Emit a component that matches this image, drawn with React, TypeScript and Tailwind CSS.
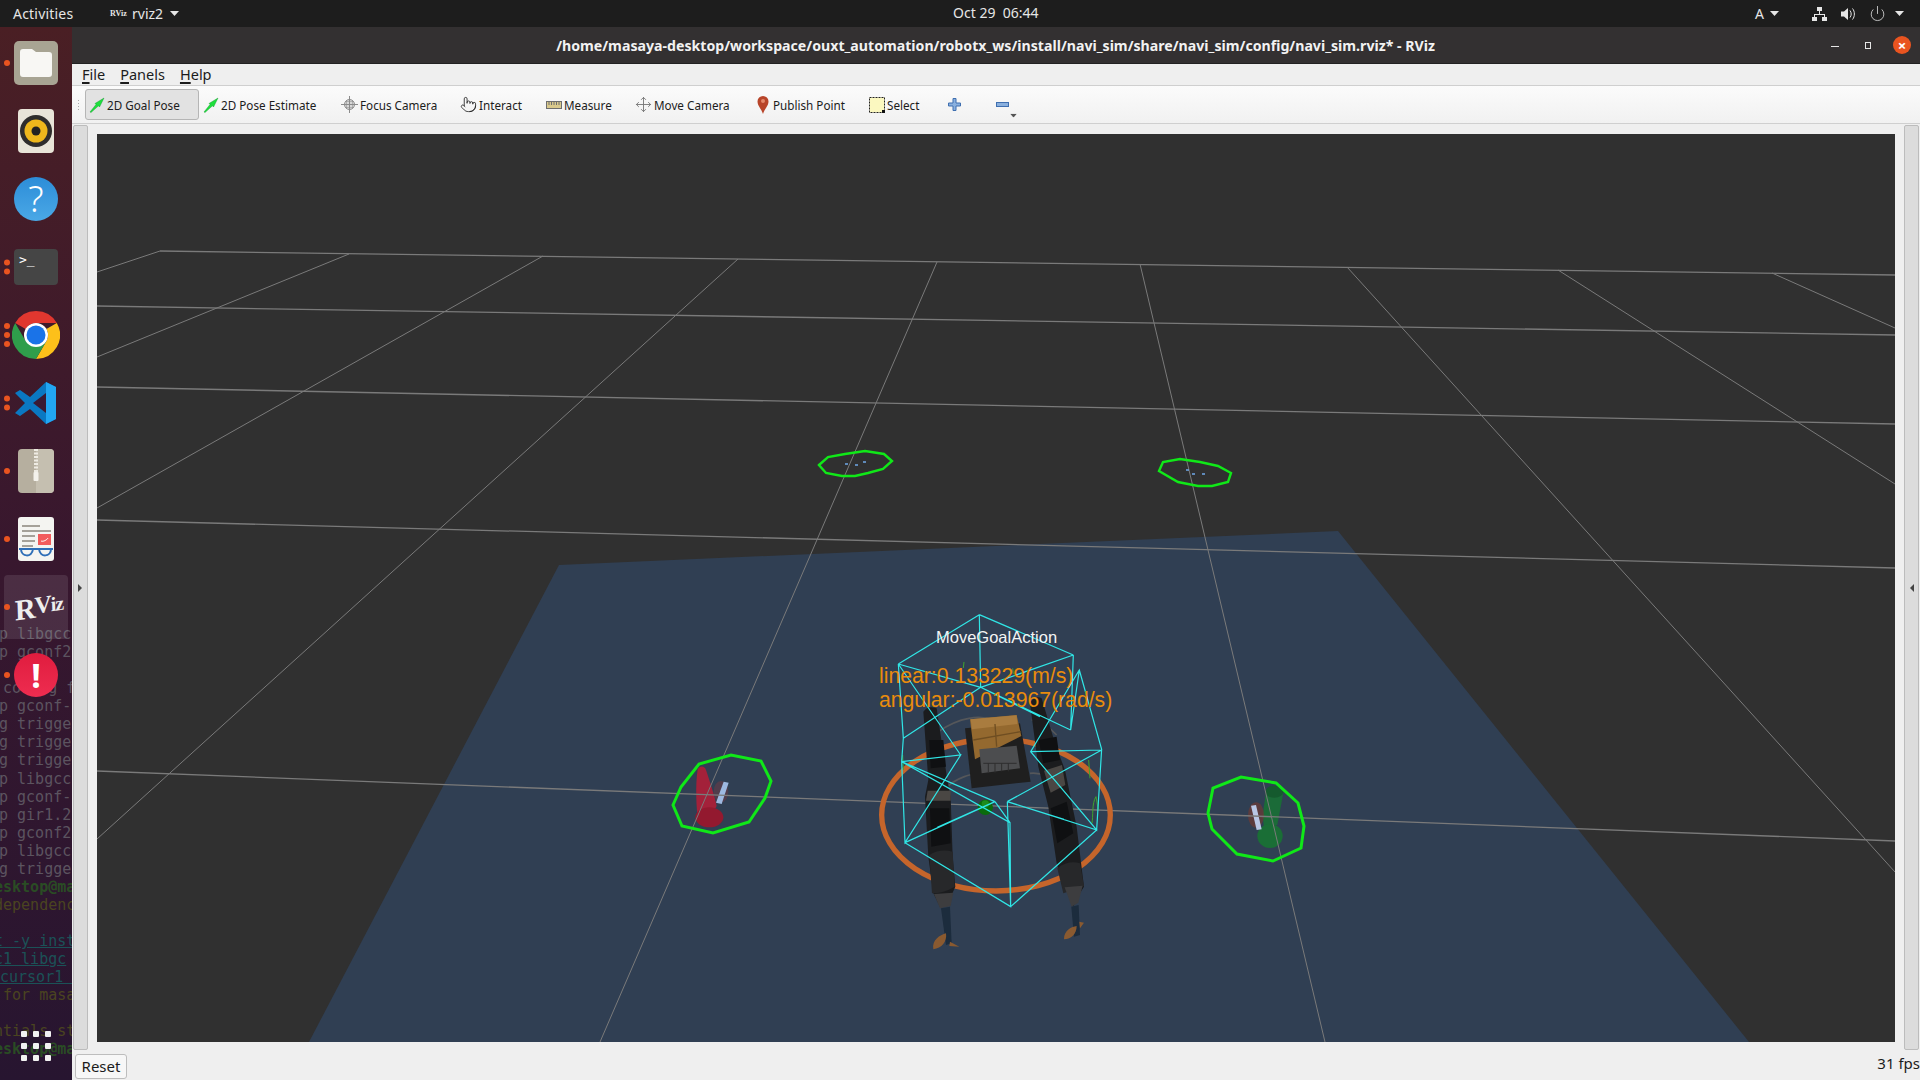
import { Move, Pointer, Power } from "lucide-react";
import React from "react";

const uiFont = "font-['Noto_Sans',sans-serif]";

const Caret = ({ className = "" }: { className?: string }) => (
  <svg width="9" height="5" viewBox="0 0 9 5" className={className}>
    <path d="M0 0H9L4.5 5Z" fill="currentColor" />
  </svg>
);

const TopBar = () => (
  <div className={`flex h-[27px] shrink-0 items-center bg-[#1d1d1d] text-[14px] text-[#e6e6e6] ${uiFont}`}>
    <span className="ml-[13px] w-[97px] tracking-[0.2px]">Activities</span>
    <span className="w-[22px] font-['Liberation_Serif',serif] text-[8px] font-bold">RViz</span>
    <span>rviz2</span>
    <Caret className="ml-[7px]" />
    <span className="mb-[2px] ml-[774px] w-[802px] whitespace-pre">Oct 29  06:44</span>
    <span>A</span>
    <Caret className="ml-[6px]" />
    <svg width="15" height="14" viewBox="0 0 15 14" className="ml-[33px]" fill="#e6e6e6">
      <rect x="5" y="0" width="5" height="4" />
      <rect x="0" y="10" width="5" height="4" />
      <rect x="10" y="10" width="5" height="4" />
      <path d="M7 4h1v3h5v3h-1V8H3v2H2V7h5Z" />
    </svg>
    <svg width="15" height="14" viewBox="0 0 15 14" className="ml-[14px]" fill="#e6e6e6">
      <path d="M0 4.500h3L7 1v12L3 9.500H0Z" />
      <path d="M9 3.500c1.600 2 1.600 5 0 7M11.500 1.500c2.500 3 2.500 8 0 11" fill="none" stroke="#e6e6e6" />
    </svg>
    <Power className="ml-[13px]" size={17} strokeWidth={1.1} />
    <Caret className="ml-[9px]" />
  </div>
);

const grey = "text-[#5c5460]";
const olive = "ml-[-5px] text-[#4a4420]";
const teal = "ml-[-5px] text-[#1b5257] underline";
const green = "ml-[-5px] font-bold text-[#2a4c24]";

const dockRows: { text: string; tone: string }[] = [
  { text: "p libgcc", tone: grey },
  { text: "p gconf2", tone: grey },
  { text: "", tone: "" },
  { text: "coding f", tone: `ml-[4px] ${grey}` },
  { text: "p gconf-", tone: grey },
  { text: "g trigge", tone: grey },
  { text: "g trigge", tone: grey },
  { text: "g trigge", tone: grey },
  { text: "p libgcc", tone: grey },
  { text: "p gconf-", tone: grey },
  { text: "p gir1.2", tone: grey },
  { text: "p gconf2", tone: grey },
  { text: "p libgcc", tone: grey },
  { text: "g trigge", tone: grey },
  { text: "esktop@ma", tone: green },
  { text: "dependenc", tone: olive },
  { text: "", tone: "" },
  { text: "t -y inst", tone: teal },
  { text: "c1 libgc", tone: teal },
  { text: "cursor1 l", tone: `ml-[1px] ${teal}` },
  { text: " for masa", tone: olive },
  { text: "", tone: "" },
  { text: "ntials st", tone: olive },
  { text: "esktop@ma", tone: green },
];

const Chrome = () => (
  <svg width="48" height="48" viewBox="0 0 48 48">
    <path d="M24 0A24 24 0 0 1 44.800 12H24A12 12 0 0 0 13.600 18L3.200 12A24 24 0 0 1 24 0Z" fill="#e0372f" />
    <path d="M44.800 12A24 24 0 0 1 24 48L34.400 30A12 12 0 0 0 34.400 18Z" fill="#fdc01a" />
    <path d="M3.200 12L13.600 30L24 36L34.400 30L24 48A24 24 0 0 1 3.200 12Z" fill="#2f9e4b" />
    <circle cx="24" cy="24" r="12" fill="#fff" />
    <circle cx="24" cy="24" r="9.500" fill="#1a73e8" />
  </svg>
);

const VsCode = () => (
  <svg width="44" height="44" viewBox="0 0 44 44">
    <path d="M32 1L42 6V38L32 43L16 28L6 35L1 32L11 22L1 12L6 9L16 16Z" fill="#0a78c2" />
    <path d="M32 1L42 6V38L32 43Z" fill="#22a6f2" />
    <path d="M32 12L19 22L32 32Z" fill="#3a1a33" />
  </svg>
);

const DocGlasses = () => (
  <svg width="36" height="44" viewBox="0 0 36 44">
    <rect width="36" height="44" rx="3" fill="#f4f4f1" />
    <path d="M4 8h18v2H4ZM4 13h29v2H4ZM4 18h13v2H4ZM4 23h13v2H4ZM4 28h11v2H4Z" fill="#a5a199" />
    <rect x="20" y="17" width="13" height="11" fill="#f25c5c" />
    <path d="M23 24c2 1 6-1 7-3" stroke="#fff" fill="none" />
    <path d="M1 32h34M3 32c0 8 11 9 12 0M21 32c1 9 12 8 12 0" stroke="#2f6fb8" strokeWidth="2" fill="none" />
  </svg>
);

const dockApps: { id: string; dots: number; icon: React.ReactNode }[] = [
  {
    id: "files",
    dots: 1,
    icon: (
      <div className="flex h-[44px] w-[44px] items-center justify-center rounded-[5px] bg-[#a8a493]">
        <svg width="32" height="28" viewBox="0 0 32 28">
          <path d="M0 3a3 3 0 0 1 3-3h9l4 3h13a3 3 0 0 1 3 3v19a3 3 0 0 1-3 3H3a3 3 0 0 1-3-3Z" fill="#f8f7f4" />
        </svg>
      </div>
    ),
  },
  {
    id: "rhythmbox",
    dots: 0,
    icon: (
      <svg width="36" height="44" viewBox="0 0 36 44">
        <rect width="36" height="44" rx="4" fill="#e8e4d8" />
        <circle cx="18" cy="22" r="16" fill="#2f2d2c" />
        <circle cx="18" cy="22" r="11.500" fill="#eeb71c" />
        <circle cx="18" cy="22" r="4.500" fill="#222" />
      </svg>
    ),
  },
  {
    id: "help",
    dots: 0,
    icon: (
      <div className="flex h-[44px] w-[44px] items-center justify-center rounded-full bg-linear-to-b from-[#2c8dd8] to-[#4aa8e6] font-['Noto_Sans',sans-serif] text-[36px] font-light leading-none text-white">
        ?
      </div>
    ),
  },
  {
    id: "terminal",
    dots: 2,
    icon: (
      <div className="h-[36px] w-[44px] rounded-[4px] bg-[#454545] pl-[5px] font-['DejaVu_Sans_Mono',monospace] text-[13px] leading-[22px] text-white">
        &gt;_
      </div>
    ),
  },
  { id: "chrome", dots: 3, icon: <Chrome /> },
  { id: "vscode", dots: 2, icon: <VsCode /> },
  {
    id: "archive",
    dots: 1,
    icon: (
      <svg width="36" height="44" viewBox="0 0 36 44">
        <rect width="36" height="44" rx="4" fill="#b6af9f" />
        <path d="M18 0h14a4 4 0 0 1 4 4v36a4 4 0 0 1-4 4H18Z" fill="#c5bfb0" />
        <path d="M18 0v24" stroke="#efece4" strokeWidth="4" strokeDasharray="2 1.500" />
        <rect x="15.500" y="23" width="5" height="9" rx="1" fill="#f4f2ec" />
      </svg>
    ),
  },
  { id: "doc", dots: 1, icon: <DocGlasses /> },
  {
    id: "rviz",
    dots: 1,
    icon: (
      <div className="ml-[6px] flex h-[36px] w-[44px] rotate-[-8deg] -skew-x-6 items-center justify-center font-['Liberation_Serif',serif] font-bold leading-none tracking-[-1px] text-[#eeeeee]">
        <span className="text-[29px]">R</span>
        <span className="-mt-[4px] text-[24px]">V</span>
        <span className="-mt-[2px] text-[20px]">iz</span>
      </div>
    ),
  },
  {
    id: "error",
    dots: 1,
    icon: (
      <div className="flex h-[44px] w-[44px] items-center justify-center rounded-full bg-linear-to-b from-[#e01c3e] to-[#ee2c50] font-['Noto_Sans',sans-serif] text-[34px] font-bold leading-none text-white">
        !
      </div>
    ),
  },
];

const Dock = () => (
  <div className="relative flex w-[72px] shrink-0 flex-col overflow-hidden bg-linear-to-b from-[#4a1f24] via-[#38172e] to-[#271530] pt-[2px]">
    <div className="absolute left-[-1px] top-[598px] font-['DejaVu_Sans_Mono',monospace] text-[15px] leading-[18.07px] whitespace-pre">
      {dockRows.map((row, i) => (
        <div key={i} className={`h-[18.07px] ${row.tone}`}>
          {row.text}
        </div>
      ))}
    </div>
    <div className="absolute left-[4px] top-[548px] h-[64px] w-[64px] rounded-[4px] bg-white/10" />
    {dockApps.map(({ id, dots, icon }) => (
      <div key={id} className="relative flex h-[68px] shrink-0 items-center justify-center">
        <div className="absolute left-[4px] top-1/2 flex -translate-y-1/2 flex-col gap-[3px]">
          {Array.from({ length: dots }).map((_, i) => (
            <span key={i} className="block h-[6px] w-[6px] rounded-full bg-[#e95420]" />
          ))}
        </div>
        {icon}
      </div>
    ))}
    <div className="relative mt-auto mb-[19px] ml-[21px] grid w-[30px] grid-cols-3 gap-[6px]">
      {Array.from({ length: 9 }).map((_, i) => (
        <span key={i} className="block h-[6px] w-[6px] rounded-[1px] bg-[#f2f2f2]" />
      ))}
    </div>
  </div>
);

const TitleBar = () => (
  <div className={`relative flex h-[37px] shrink-0 items-center justify-center border-b border-[#222] bg-[#333031] pt-[2px] text-[14.15px] font-bold text-[#f2f2f2] ${uiFont}`}>
    <span className="ml-[-1px]">/home/masaya-desktop/workspace/ouxt_automation/robotx_ws/install/navi_sim/share/navi_sim/config/navi_sim.rviz* - RViz</span>
    <div className="absolute right-[9px] top-[9px] flex items-center">
      <span className="mr-[26px] mt-[3px] block h-px w-[8px] bg-[#e6e6e6]" />
      <span className="mr-[22px] block h-[7px] w-[6px] border border-[#e6e6e6]" />
      <span className="flex h-[18px] w-[18px] items-center justify-center rounded-full bg-[#e95420] text-[15px] leading-none text-white">×</span>
    </div>
  </div>
);

const MenuBar = () => (
  <div className={`flex h-[21px] shrink-0 items-center gap-[15px] bg-[#efefef] pl-[10px] text-[14.5px] text-[#1c1c1c] ${uiFont}`}>
    {["File", "Panels", "Help"].map((label) => (
      <span key={label}>
        <span className="underline decoration-2 underline-offset-2">{label[0]}</span>
        {label.slice(1)}
      </span>
    ))}
  </div>
);

const GoalArrow = () => (
  <svg width="16" height="16" viewBox="0 0 16 16">
    <path d="M1 15L7 7.500L6 6.500L15 1L10.500 10L9.500 8.800L2 15.500Z" fill="#1ee03c" stroke="#0f8f2a" strokeWidth="0.4" />
  </svg>
);

const toolbarItems: { label: string; className: string; icon: React.ReactNode }[] = [
  { label: "2D Goal Pose", className: "w-[114px] pl-[3px] rounded-[3px] border border-[#b5b5b5] bg-[#e2e2e2]", icon: <GoalArrow /> },
  { label: "2D Pose Estimate", className: "w-[138px] pl-[4px]", icon: <GoalArrow /> },
  {
    label: "Focus Camera",
    className: "w-[119px] pl-[4px]",
    icon: (
      <svg width="17" height="17" viewBox="0 0 17 17" fill="none" stroke="#8b8b8b">
        <circle cx="8.500" cy="8.500" r="5" fill="#d8d8d8" />
        <path d="M8.500 0v17M0 8.500h17" />
        <path d="M5 5.500h7M5 11.500h7M5.500 5v7M11.500 5v7" strokeWidth="0.5" />
      </svg>
    ),
  },
  { label: "Interact", className: "w-[86px] pl-[4px]", icon: <Pointer size={17} strokeWidth={1.2} color="#222" /> },
  {
    label: "Measure",
    className: "w-[90px] pl-[4px]",
    icon: (
      <svg width="16" height="8" viewBox="0 0 16 8">
        <rect x="0.500" y="0.500" width="15" height="7" fill="#d9c98c" stroke="#6e6e6e" />
        <path d="M3 1v3M5.500 1v3M8 1v3M10.500 1v3M13 1v3" stroke="#6e6e6e" />
      </svg>
    ),
  },
  { label: "Move Camera", className: "w-[120px] pl-[3px]", icon: <Move size={17} strokeWidth={1.3} color="#777" /> },
  {
    label: "Publish Point",
    className: "w-[113px] pl-[3px]",
    icon: (
      <svg width="16" height="20" viewBox="0 0 16 20">
        <path d="M8 1a5.500 5.500 0 0 1 5.500 5.500C13.500 11 9.500 14 8 19 6.500 14 2.500 11 2.500 6.500A5.500 5.500 0 0 1 8 1Z" fill="#b8452a" />
        <circle cx="8" cy="6" r="2" fill="#e58a6c" />
      </svg>
    ),
  },
  {
    label: "Select",
    className: "w-[79px] pl-[4px]",
    icon: (
      <svg width="16" height="16" viewBox="0 0 16 16">
        <rect x="0.500" y="0.500" width="15" height="15" fill="#fbf8c0" stroke="#222" strokeDasharray="2 1" />
        <path d="M13 13h3v3h-3Z" fill="#111" />
      </svg>
    ),
  },
  {
    label: "",
    className: "w-[48px] pl-[4px]",
    icon: (
      <svg width="13" height="13" viewBox="0 0 13 13">
        <path d="M5 0.500h3v4.500h4.500v3H8v4.500H5V8H0.500V5H5Z" fill="#8ab0de" stroke="#3f6fb0" />
      </svg>
    ),
  },
  {
    label: "",
    className: "w-[20px] pl-[4px]",
    icon: (
      <svg width="13" height="5" viewBox="0 0 13 5">
        <rect x="0.500" y="0.500" width="12" height="4" fill="#8ab0de" stroke="#3f6fb0" />
      </svg>
    ),
  },
];

const Toolbar = () => (
  <div className={`relative flex h-[39px] shrink-0 items-center border-y border-[#cfcfcf] bg-linear-to-b from-[#fbfbfb] to-[#f1f1f1] pl-[13px] text-[11.7px] text-[#1c1c1c] ${uiFont}`}>
    <span className="absolute left-[5px] top-[13px] h-[12px] w-[4px] bg-[radial-gradient(#aaa_1px,transparent_1px)] bg-[length:3px_3px]" />
    {toolbarItems.map(({ label, className, icon }, i) => (
      <div key={i} className={`flex h-[31px] shrink-0 items-center gap-[2px] whitespace-nowrap ${className}`}>
        {icon}
        {label && <span className="pt-[2px]">{label}</span>}
      </div>
    ))}
    <Caret className="mt-[21px] ml-[-3px] scale-75 text-[#555]" />
  </div>
);

const farGreenA = "819,465 828,457 845,454 865,451 884,454 892,461 883,469 868,473 855,476 842,476 826,473";
const farGreenB = "1159,471 1163,462 1180,459 1200,462 1218,466 1231,473 1228,482 1212,486 1198,486 1178,482";
const nearGreenA = "673,805 681,787 699,764 731,755 761,761 771,781 765,798 749,822 713,833 682,826";
const nearGreenB = "1208,813 1213,788 1241,777 1276,783 1298,803 1304,826 1301,848 1273,861 1237,854 1212,829";

const gridLines: [number, number, number, number][] = [
  [160, 251, 1895, 275],
  [97, 306, 1895, 335],
  [97, 387, 1895, 424],
  [97, 520, 1895, 568],
  [97, 771, 1895, 841],
  [160, 251, 97, 272],
  [349, 254, 97, 357],
  [543, 256, 97, 508],
  [738, 259, 97, 839],
  [937, 262, 600, 1042],
  [1140, 264, 1325, 1042],
  [1347, 267, 1895, 872],
  [1558, 270, 1895, 484],
  [1772, 273, 1895, 328],
];

const cyanLines =
  "M358 44L115 192M358 44L640 165M358 44L362 262M115 192L130 415M115 192L302 465M640 165L632 390M362 262L632 390M362 262L130 415M115 192L362 262M640 165L362 262" +
  "M658 210L725 448L710 690L512 455ZM512 455L725 450M658 210L632 390" +
  "M125 485L302 465L135 728ZM125 485L450 668L452 920L135 728M442 605L710 690L452 920M442 605L725 450M442 605L452 920M405 605L135 728M405 605L450 668M125 485L405 605M125 485L130 415" +
  "M232 682L405 605M612 658L442 605M540 350L362 262";

const Robot = () => (
  <g transform="translate(860 600) scale(0.3333)">
    <ellipse cx="408" cy="645" rx="343" ry="228" fill="none" stroke="#c5652b" strokeWidth="16" />
    <path d="M235 395C300 350 360 345 400 360M515 360C550 365 570 385 590 405M250 570C290 530 340 520 350 525M510 520C550 515 580 540 600 560" fill="none" stroke="#55575a" strokeWidth="5" />
    <path d="M315 385L480 370L512 545L335 565Z" fill="#1f1f1f" />
    <path d="M330 358L470 345L484 408L345 478Z" fill="#94692f" />
    <path d="M332 358L470 346L472 372L336 388Z" fill="#a97c3f" />
    <path d="M340 420L482 395M405 372L410 440" stroke="#6f4e22" strokeWidth="4" />
    <path d="M358 448L470 437L480 505L365 520Z" fill="#4c4d4f" />
    <path d="M370 490h100M385 490v28M405 490v28M425 490v24M445 490v24" stroke="#2e2e2e" strokeWidth="3" />
    <path d="M190 335Q205 315 230 325L262 540L272 590L278 770L286 860L272 892L240 920L220 880L205 770L195 590L205 540Z" fill="#1b1c1e" />
    <path d="M510 310Q525 285 545 295L585 430L615 510L650 680L672 860L660 880L640 920L610 850L590 790L565 620L535 500Z" fill="#1b1c1e" />
    <path d="M203 572L272 572L272 602L198 602Z" fill="#4a4744" />
    <path d="M552 512L606 495L616 555L572 578Z" fill="#4a4744" />
    <path d="M208 420L250 420L258 500L212 505ZM210 625L268 625L272 730L214 740Z" fill="#0f1012" />
    <path d="M536 420L590 410L600 480L550 490ZM572 625L620 605L640 700L592 730Z" fill="#0f1012" />
    <path d="M208 765Q240 745 278 755L284 860Q250 880 216 880Z" fill="#27282a" />
    <path d="M592 805Q625 780 660 790L672 858Q640 870 610 880Z" fill="#27282a" />
    <path d="M222 882L280 878L272 918L240 925Z" fill="#3d3d3f" />
    <path d="M614 862L668 857L655 908L635 920Z" fill="#3d3d3f" />
    <path d="M243 925L270 920L275 1030L258 1035Z" fill="#1c2c3d" />
    <path d="M634 920L656 915L660 1005L642 1010Z" fill="#1c2c3d" />
    <path d="M220 1048C215 1020 240 1005 258 1000C262 1025 245 1045 220 1048ZM270 1025L298 1040L268 1038Z" fill="#8a5a30" />
    <path d="M612 1018C612 990 635 980 650 978C650 1000 635 1018 612 1018ZM658 965L672 968L660 985Z" fill="#8a5a30" />
    <circle cx="376" cy="622" r="23" fill="#0a6b0c" />
    <circle cx="376" cy="612" r="11" fill="#2aa02a" opacity="0.6" />
    <path d="M686 480L690 535M708 590C695 610 700 650 696 670M708 590L715 630M312 186L310 204M458 205L460 222M128 465L130 510" stroke="#3fa52c" strokeWidth="3" fill="none" />
    <path d={cyanLines} fill="none" stroke="#30e6e6" strokeWidth="3.6" />
  </g>
);

const Viewport = () => (
  <svg viewBox="97 134 1798 908" className="block h-full w-full bg-[#303030]">
    <polygon points="559,565 1338,531 1749,1042 309,1042" fill="#303f53" />
    <g transform="translate(650 730) scale(0.3333)">
      <ellipse cx="213" cy="185" rx="22" ry="32" fill="#6e3a45" opacity="0.55" />
      <path d="M143 118C150 105 165 108 168 120C178 150 195 200 200 228L170 280L143 265C140 235 135 170 143 118Z" fill="#a3213a" />
      <ellipse cx="178" cy="262" rx="42" ry="30" fill="#93192f" />
      <path d="M221 155L236 158L215 222L198 218Z" fill="#9db8e0" />
    </g>
    <g transform="translate(1190 750) scale(0.3333)">
      <path d="M228 125L280 128L262 225L222 235L218 195Z" fill="#1b6b38" />
      <ellipse cx="253" cy="125" rx="27" ry="18" fill="#155a2e" />
      <ellipse cx="240" cy="258" rx="38" ry="36" fill="#1a6e36" />
      <ellipse cx="198" cy="195" rx="24" ry="38" fill="#6e3a35" opacity="0.7" />
      <path d="M183 167L198 165L215 238L200 240Z" fill="#b9c7e6" />
    </g>
    {gridLines.map(([x1, y1, x2, y2], i) => (
      <line key={i} x1={x1} y1={y1} x2={x2} y2={y2} stroke="#7a7a7a" strokeWidth={i < 5 ? 1.3 : 1} />
    ))}
    <polygon points={farGreenA} fill="none" stroke="#10e818" strokeWidth="2.4" />
    <polygon points={farGreenB} fill="none" stroke="#10e818" strokeWidth="2.4" />
    <polygon points={nearGreenA} fill="none" stroke="#10e818" strokeWidth="3" />
    <polygon points={nearGreenB} fill="none" stroke="#10e818" strokeWidth="3" />
    <path d="M845 464h3M855 465h3M863 462h3M1186 470h3M1192 474h3M1202 474h3" stroke="#6fa8e8" strokeWidth="1.3" />
    <Robot />
    <g className="font-['Liberation_Sans',sans-serif]">
      <text x="936" y="643" fontSize="16.500" fill="#f4f4f4">MoveGoalAction</text>
      <text x="879" y="683" fontSize="21.200" fill="#ea8c0c">linear:0.133229(m/s)</text>
      <text x="879" y="707" fontSize="21.200" fill="#ea8c0c">angular:-0.013967(rad/s)</text>
    </g>
  </svg>
);

const App = () => (
  <div className="flex h-[1080px] w-[1920px] flex-col overflow-hidden bg-[#efefef]">
    <TopBar />
    <div className="flex min-h-0 flex-1">
      <Dock />
      <div className="flex min-w-0 flex-1 flex-col">
        <TitleBar />
        <MenuBar />
        <Toolbar />
        <div className="flex h-[926px] shrink-0 pt-px">
          <div className="ml-px flex w-[15px] shrink-0 items-center rounded-[2px] border border-[#bcbcbc] bg-[#dcdcdc] pl-[4px]">
            <span className="block h-0 w-0 border-y-[4px] border-l-[4px] border-y-transparent border-l-[#444]" />
          </div>
          <div className="mx-[9px] mt-[9px] mb-[8px] min-w-0 flex-1">
            <Viewport />
          </div>
          <div className="mr-px flex w-[15px] shrink-0 items-center rounded-[2px] border border-[#bcbcbc] bg-[#dcdcdc] pl-[5px]">
            <span className="block h-0 w-0 border-y-[4px] border-r-[4px] border-y-transparent border-r-[#444]" />
          </div>
        </div>
        <div className={`flex flex-1 items-center justify-between pl-[3px] text-[15px] text-[#1c1c1c] ${uiFont}`}>
          <button className="mt-[2px] flex h-[25px] w-[52px] items-center justify-center rounded-[3px] border border-[#bdbdbd] bg-[#f7f7f7]">Reset</button>
          <span className="mb-[3px]">31 fps</span>
        </div>
      </div>
    </div>
  </div>
);

export default App;
